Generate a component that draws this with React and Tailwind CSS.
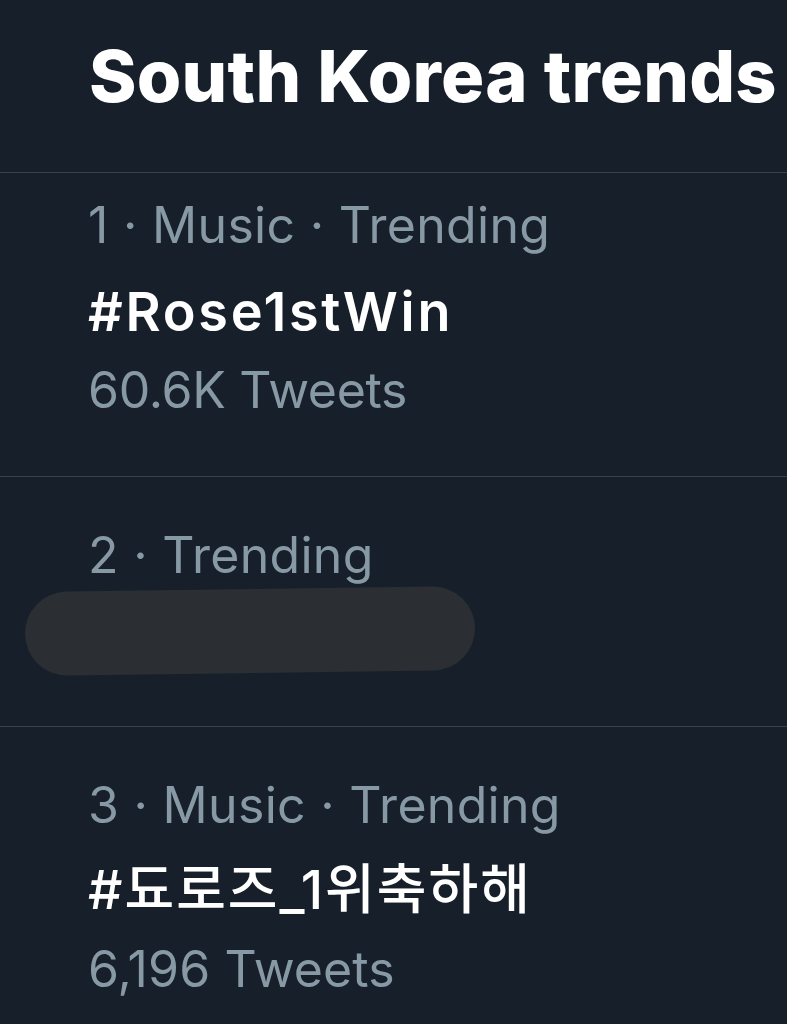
import React from "react";

const font = { fontFamily: "Inter, 'Noto Sans CJK KR', sans-serif" };

// trend rows, tweets/topic are optional (row 2 is blurred out)
const trends = [
  { rank: 1, meta: "1 · Music · Trending", tag: "#Rose1stWin", count: "60.6K Tweets" },
  { rank: 2, meta: "2 · Trending", hidden: true },
  { rank: 3, meta: "3 · Music · Trending", tag: "#됴로즈_1위축하해", count: "6,196 Tweets" },
];

function Meta({ children }) {
  return (
    <div className="text-[50px] leading-[60px] text-[#8899a6] tracking-[0.3px]">{children}</div>
  );
}

export default function App() {
  return (
    <div
      className="min-h-screen w-full overflow-hidden bg-[#17202a] text-white"
      style={font}
    >
      {/* Header */}
      <header className="h-[172px] pl-[89px] pt-[36px]">
        <h1 className="text-[72px] leading-[80px] font-extrabold tracking-[0.2px] whitespace-nowrap">
          South Korea trends
        </h1>
      </header>

      {/* Trend 1 */}
      <section className="border-t border-[#38444d] pl-[88px] pt-[22px] pb-[56px]">
        <Meta>{trends[0].meta}</Meta>
        <div className="mt-[27px] text-[54px] leading-[60px] font-semibold tracking-[2.7px]">{trends[0].tag}</div>
        <div className="mt-[18px] text-[50px] leading-[60px] text-[#8899a6] tracking-[-0.3px]">{trends[0].count}</div>
      </section>

      {/* Trend 2 (censored) */}
      <section className="border-t border-[#38444d] pl-[88px] pt-[48px] pb-[53px]">
        <Meta>{trends[1].meta}</Meta>
        <div className="-ml-[63px] mt-[4px] h-[84px] w-[450px] rounded-full bg-[#2b2f33] -rotate-[0.8deg]" />
      </section>

      {/* Trend 3 */}
      <section className="border-t border-[#38444d] pl-[88px] pt-[48px]">
        <Meta>{trends[2].meta}</Meta>
        <div className="mt-[25px] text-[54px] leading-[60px] font-medium tracking-[2px]">{trends[2].tag}</div>
        <div className="mt-[19px] text-[50px] leading-[60px] text-[#8899a6] tracking-[0.1px]">{trends[2].count}</div>
      </section>
    </div>
  );
}
